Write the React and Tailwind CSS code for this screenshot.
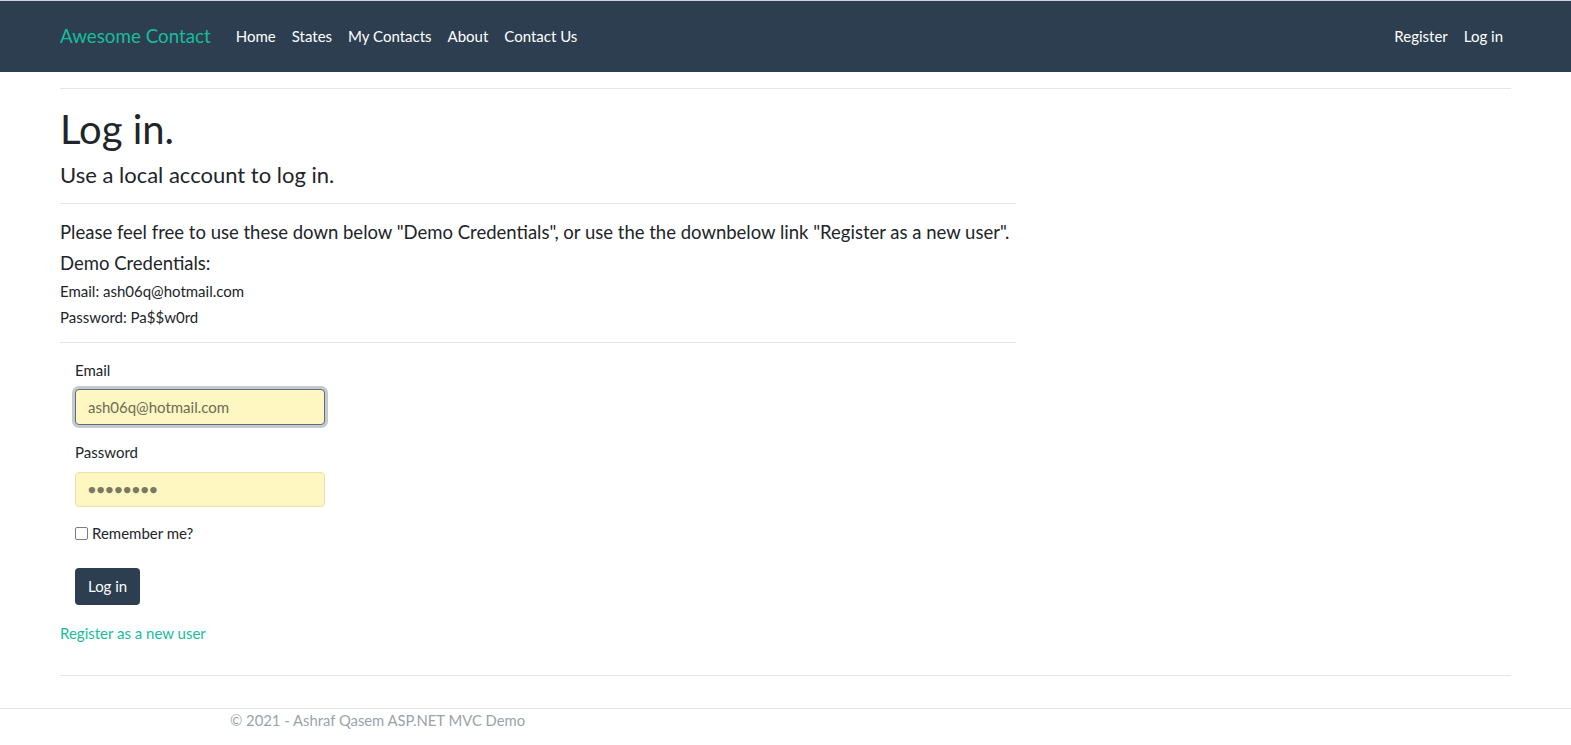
import React from 'react';

const App = () => {
  return (
    <div className="min-h-screen bg-white text-[#212529]" style={{ fontFamily: 'Lato, "Liberation Sans", sans-serif' }}>
      <nav className="h-[72px] bg-[#2c3e50] border-t border-[#d0d4d8]">
        <div className="mx-[60px] h-full flex items-center">
          <a className="text-[#18bc9c] text-[18.8px] mr-[25px]">Awesome Contact</a>
          <ul className="flex gap-4 text-white text-[15px]">
            <li>Home</li>
            <li>States</li>
            <li>My Contacts</li>
            <li>About</li>
            <li>Contact Us</li>
          </ul>
          <ul className="ml-auto flex gap-4 text-white text-[15px] mr-2">
            <li>Register</li>
            <li>Log in</li>
          </ul>
        </div>
      </nav>

      <div className="mx-[60px]">
        <hr className="mt-4 border-[#e5e5e5]" />
        <div className="w-[956px]">
          <h1 className="text-[40px] leading-[48px] mt-[16px]">Log in.</h1>
          <h2 className="text-[22px] leading-[26px] mt-[9px]">Use a local account to log in.</h2>
          <hr className="mt-[15px] border-[#e5e5e5]" />
          <p className="text-[18.5px] leading-[22px] mt-[17px]">
            Please feel free to use these down below "Demo Credentials", or use the the downbelow link "Register as a new user".
          </p>
          <p className="text-[18.5px] leading-[22px] mt-[9px]">Demo Credentials:</p>
          <p className="text-[15px] leading-[18px] mt-[8px]">Email: ash06q@hotmail.com</p>
          <p className="text-[15px] leading-[18px] mt-[8px]">Password: Pa$$w0rd</p>
          <hr className="mt-[16px] border-[#e5e5e5]" />

          <form className="pl-[15px] pt-[18px] text-[15px]">
            <label className="block leading-[18px]">Email</label>
            <div className="mt-[10px] w-[250px] h-[36px] rounded-[4px] bg-[#fff7c2] border border-[#5b6d7e] ring-[3px] ring-[#c4c9ce] flex items-center px-3 text-[#6d6b55] text-[15px]">
              ash06q@hotmail.com
            </div>
            <label className="block leading-[18px] mt-[18px]">Password</label>
            <div className="mt-[11px] w-[250px] h-[35px] rounded-[4px] bg-[#fff7c2] border border-[#ece0a8] flex items-center px-3 text-[#7a7862] text-[13px] tracking-[1px]">
              ●●●●●●●●
            </div>
            <div className="flex items-center mt-[17px] leading-[18px]">
              <span className="w-[13px] h-[13px] border border-[#7b7b85] rounded-[2px] bg-white mr-[4px]"></span>
              <span>Remember me?</span>
            </div>
            <button type="button" className="mt-[26px] h-[37px] px-[13px] rounded-[4px] bg-[#2c3e50] text-white text-[15px]">
              Log in
            </button>
          </form>
          <a className="block text-[#18bc9c] text-[15px] leading-[18px] mt-[19px]">Register as a new user</a>
        </div>
        <hr className="mt-[33px] border-[#e5e5e5]" />
      </div>
      <footer className="mt-[32px] border-t border-[#e0e3e6]">
        <p className="pl-[230px] pt-0 text-[14.8px] text-[#99a3ab]">© 2021 - Ashraf Qasem ASP.NET MVC Demo</p>
      </footer>
    </div>
  );
};

export default App;
